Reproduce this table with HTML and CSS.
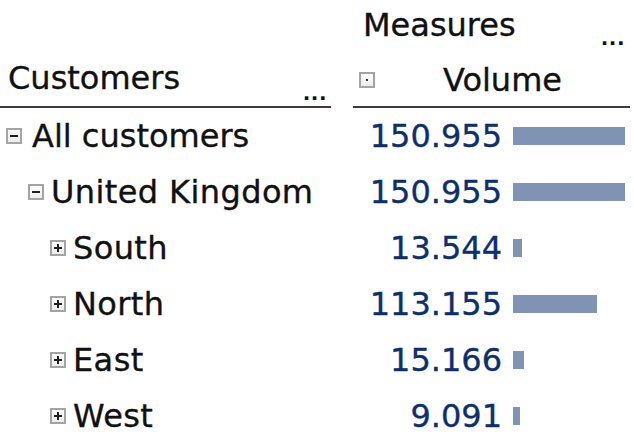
FILE: index.html
```html
<!DOCTYPE html>
<html lang="en">
<head>
<meta charset="utf-8">
<title>Pivot</title>
<link rel="stylesheet" href="styles.css">
</head>
<body>
<div class="pivot">
  <div class="cell corner"></div>
  <div class="cell measures"><span class="title">Measures</span><span class="more">...</span></div>

  <div class="cell head head-left"><span class="title">Customers</span><span class="more">...</span></div>
  <div class="cell head head-right"><span class="box box-dot"></span><span class="title vol">Volume</span></div>

  <div class="cell label lvl0"><span class="box box-minus"></span><span class="text">All customers</span></div>
  <div class="cell value"><span class="num">150.955</span><span class="track"><span class="bar" style="width:112px"></span></span></div>

  <div class="cell label lvl1"><span class="box box-minus"></span><span class="text">United Kingdom</span></div>
  <div class="cell value"><span class="num">150.955</span><span class="track"><span class="bar" style="width:112px"></span></span></div>

  <div class="cell label lvl2"><span class="box box-plus"></span><span class="text">South</span></div>
  <div class="cell value"><span class="num">13.544</span><span class="track"><span class="bar" style="width:9px"></span></span></div>

  <div class="cell label lvl2"><span class="box box-plus"></span><span class="text">North</span></div>
  <div class="cell value"><span class="num">113.155</span><span class="track"><span class="bar" style="width:84px"></span></span></div>

  <div class="cell label lvl2"><span class="box box-plus"></span><span class="text">East</span></div>
  <div class="cell value"><span class="num">15.166</span><span class="track"><span class="bar" style="width:11px"></span></span></div>

  <div class="cell label lvl2"><span class="box box-plus"></span><span class="text">West</span></div>
  <div class="cell value"><span class="num">9.091</span><span class="track"><span class="bar" style="width:7px"></span></span></div>
</div>
</body>
</html>
```
FILE: styles.css
```css
html, body {
  margin: 0;
  padding: 0;
  background: #ffffff;
}

body {
  font-family: "DejaVu Sans", "Liberation Sans", sans-serif;
  font-size: 32px;
  color: #111111;
  -webkit-text-stroke: 0.35px currentColor;
}

.pivot {
  display: grid;
  grid-template-columns: 331px 277px;
  grid-template-rows: 50px 58px;
  grid-auto-rows: 56px;
  column-gap: 22px;
}

.cell {
  display: flex;
  box-sizing: border-box;
  min-width: 0;
}

.title {
  white-space: nowrap;
}

.more {
  font-size: 20px;
  font-weight: bold;
  line-height: 18px;
  letter-spacing: 0.5px;
  align-self: flex-end;
  color: #111111;
  -webkit-text-stroke: 0;
}

.measures {
  justify-content: space-between;
  line-height: 50px;
  padding-left: 10px;
  padding-right: 5px;
}

.measures .more {
  margin-bottom: 3px;
}

.head {
  border-bottom: 2px solid #3c3c3c;
  line-height: 56px;
}

.head-left {
  justify-content: space-between;
  padding-left: 8px;
  padding-right: 4px;
}

.head-left .more {
  margin-bottom: 4px;
}

.head-right {
  align-items: flex-start;
}

.head-right .box {
  margin-left: 6px;
  margin-top: 22px;
}

.vol {
  flex: 1;
  text-align: center;
  line-height: 52px;
  padding-top: 4px;
}

.box {
  flex: none;
  width: 16px;
  height: 16px;
  box-sizing: border-box;
  border: 2px solid #a4a4a4;
  background: linear-gradient(#ffffff, #ececec);
  display: flex;
  align-items: center;
  justify-content: center;
  position: relative;
}

.box-minus::before,
.box-plus::before {
  content: "";
  width: 8px;
  height: 2px;
  background: #1e1e1e;
}

.box-plus::after {
  content: "";
  position: absolute;
  width: 2px;
  height: 8px;
  background: #1e1e1e;
}

.box-dot::before {
  content: "";
  width: 2px;
  height: 2px;
  background: #333333;
}

.label {
  align-items: center;
  line-height: 56px;
  white-space: nowrap;
}

.lvl0 { padding-left: 6px; }
.lvl1 { padding-left: 28px; }
.lvl2 { padding-left: 50px; }

.lvl0 .box {
  margin-right: 10px;
}

.lvl1 .box,
.lvl2 .box {
  margin-right: 7px;
}

.lvl1 .text,
.lvl2 .text {
  letter-spacing: 0.4px;
}

.value {
  align-items: center;
  line-height: 56px;
}

.num {
  width: 149px;
  text-align: right;
  color: #0d2f6c;
  white-space: nowrap;
}

.track {
  width: 112px;
  margin-left: 11px;
  display: flex;
  align-items: center;
}

.bar {
  display: block;
  height: 18px;
  background: #7f93b5;
}
```
